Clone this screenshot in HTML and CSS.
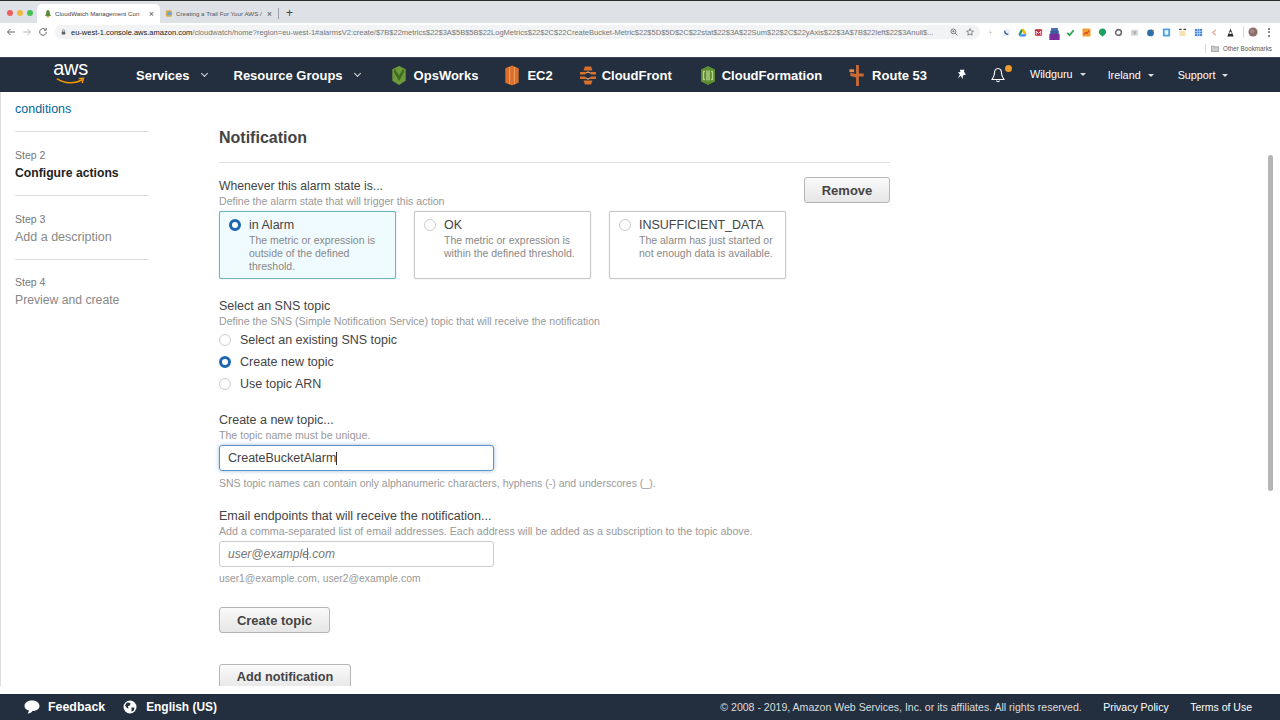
FILE: index.html
```html
<!DOCTYPE html>
<html lang="en">
<head>
<meta charset="utf-8">
<title>CloudWatch Management Console</title>
<link rel="stylesheet" href="styles.css">
</head>
<body>
<div class="page">
  <div class="tabstrip">
    <div class="lights"><i class="light red"></i><i class="light amber"></i><i class="light green"></i></div>
    <div class="tab active">
      <svg class="favicon" viewBox="0 0 10 10"><path d="M5 .5C3.4.5 2.8 2 2.8 4 2.8 6 1.500 7 1.500 8H8.500C8.500 7 7.200 6 7.200 4 7.200 2 6.600.5 5 .5Z" fill="#5c8a3a"/><rect x="3.500" y="8" width="3" height="1.800" fill="#c9a13a"/></svg>
      <span class="tabtext">CloudWatch Management Con</span><span class="tabx">×</span>
    </div>
    <div class="tab">
      <svg class="favicon" viewBox="0 0 10 10"><rect x="1" y="1" width="8" height="8" rx="2" fill="#e0a84a"/><circle cx="5.500" cy="5" r="2.500" fill="#6aa6cc"/></svg>
      <span class="tabtext">Creating a Trail For Your AWS /</span><span class="tabx">×</span>
    </div>
    <span class="tabsep"></span>
    <span class="newtab">+</span>
  </div>

  <div class="toolbar">
    <svg class="navicon" viewBox="0 0 12 12"><path d="M10.500 6H2M5.500 2.300 1.800 6l3.700 3.700" fill="none" stroke="#5f6368" stroke-width="1.200"/></svg>
    <svg class="navicon" viewBox="0 0 12 12"><path d="M1.500 6H10M6.500 2.300 10.200 6 6.500 9.700" fill="none" stroke="#b4b7bb" stroke-width="1.200"/></svg>
    <svg class="navicon" viewBox="0 0 12 12"><path d="M10 6A4 4 0 1 1 8.800 3.100M9.800 1.200V3.800H7.200" fill="none" stroke="#5f6368" stroke-width="1.200"/></svg>
    <div class="omnibox">
      <svg class="lock" viewBox="0 0 8 10"><rect x="1" y="4" width="6" height="5" rx=".8" fill="#5f6368"/><path d="M2.300 4V2.800a1.700 1.700 0 0 1 3.400 0V4" fill="none" stroke="#5f6368"/></svg>
      <span class="url"><b>eu-west-1.console.aws.amazon.com</b>/cloudwatch/home?region=eu-west-1#alarmsV2:create/$7B$22metrics$22$3A$5B$5B$22LogMetrics$22$2C$22CreateBucket-Metric$22$5D$5D$2C$22stat$22$3A$22Sum$22$2C$22yAxis$22$3A$7B$22left$22$3Anull$...</span>
      <svg class="omniicon" viewBox="0 0 10 10"><circle cx="4.200" cy="4.200" r="3" fill="none" stroke="#5f6368"/><path d="M6.500 6.500 9.300 9.300M3 4.200H5.400M4.200 3V5.400" stroke="#5f6368"/></svg>
      <svg class="omniicon" viewBox="0 0 10 10"><path d="M5 .8 6.200 3.700 9.300 4 7 6 7.700 9 5 7.500 2.300 9 3 6 .7 4 3.800 3.700Z" fill="none" stroke="#5f6368" stroke-width=".9"/></svg>
    </div>
    <div class="extensions">
      <svg class="ext" viewBox="0 0 10 10"><path d="M5.500 1 3.500 5.500H5L4.500 9 6.500 4.500H5Z" fill="#c8cbd0"/></svg>
      <svg class="ext" viewBox="0 0 10 10"><circle cx="5" cy="5" r="4" fill="#e8eef5"/><path d="M3 3c0 2.500 1.500 4 4 4" fill="none" stroke="#2b5e9e" stroke-width="1.400"/></svg>
      <svg class="ext" viewBox="0 0 10 10"><path d="M3.500 1H6.500L9.500 7H6.500Z" fill="#f4b400"/><path d="M3.500 1 .5 7 2 9.500 5 3.500Z" fill="#0f9d58"/><path d="M2 9.500H8L9.500 7H3.500Z" fill="#4285f4"/></svg>
      <svg class="ext" viewBox="0 0 10 10"><rect x="1" y="1.500" width="8" height="7" rx="1" fill="#c5283d"/><path d="M2.500 7.500V3.500L5 6l2.500-2.500V7.500" fill="none" stroke="#fff"/></svg>
      <svg class="ext tall" viewBox="0 0 12 14"><rect x="2" y="0" width="8" height="3.500" fill="#4a6fb5"/><rect x="1" y="3" width="10" height="4" fill="#3d5a9c"/><rect x="0" y="7" width="12" height="7" fill="#7b2d9b"/></svg>
      <svg class="ext" viewBox="0 0 10 10"><path d="M1.500 5.500 4 8 8.500 2.500" fill="none" stroke="#2e9e4f" stroke-width="2"/></svg>
      <svg class="ext" viewBox="0 0 10 10"><rect x=".5" y=".5" width="9" height="9" rx="1" fill="#f0a030"/><path d="M2 7 4 5 5.500 6 8 3" fill="none" stroke="#d9432f" stroke-width="1.300"/></svg>
      <svg class="ext" viewBox="0 0 10 10"><path d="M5 .5C7.500.5 9 2.300 9 4.500 9 6.800 7 8 5 9.500 3 8 1 6.800 1 4.500 1 2.300 2.500.5 5 .5Z" fill="#1aa260"/></svg>
      <svg class="ext" viewBox="0 0 10 10"><circle cx="5" cy="5" r="3.200" fill="none" stroke="#6b6e72" stroke-width="1.800"/></svg>
      <svg class="ext" viewBox="0 0 10 10"><rect x="1" y="2" width="8" height="6.500" rx="1" fill="#d5d7da"/><rect x="4" y="3.500" width="2.500" height="3.500" fill="#a9acb0"/></svg>
      <svg class="ext" viewBox="0 0 10 10"><circle cx="5" cy="5.500" r="3.800" fill="#2f6fa8"/><path d="M6 1 9 3 6.500 4.500Z" fill="#6b6e72"/></svg>
      <svg class="ext" viewBox="0 0 10 10"><rect x="1" y=".5" width="8" height="9" rx="1" fill="#4da3e0"/><rect x="3" y="2.500" width="4" height="5" fill="#e8f3fb"/></svg>
      <svg class="ext" viewBox="0 0 10 10"><rect x="1.500" y="3" width="7" height="6" fill="#f3e3b5"/><path d="M1 1.500H4M6 1.500H9" stroke="#444" stroke-width="1.400"/></svg>
      <svg class="ext" viewBox="0 0 10 10"><rect x="1" y="1" width="8" height="8" fill="#3f7fd9"/><path d="M3.700 1V9M6.300 1V9M1 3.700H9M1 6.300H9" stroke="#e6f0fb" stroke-width=".7"/></svg>
      <svg class="ext" viewBox="0 0 10 10"><path d="M6.500 2 3 5l3.500 3" fill="none" stroke="#eab2b2" stroke-width="1.800"/></svg>
      <svg class="ext" viewBox="0 0 10 10"><path d="M5 .5 8.500 9.500H1.500Z" fill="#2c2c2c"/><circle cx="5" cy="5.500" r="1.300" fill="#eee"/></svg>
      <span class="extsep"></span>
      <svg class="avatar" viewBox="0 0 12 12"><circle cx="6" cy="6" r="5.500" fill="#8f6f6b"/><circle cx="5" cy="5" r="2.500" fill="#a78782"/></svg>
      <span class="kebab"><i></i><i></i><i></i></span>
    </div>
  </div>

  <div class="bookmarks">
    <span class="bmsep"></span>
    <svg class="folder" viewBox="0 0 12 10"><path d="M.5 1.500H4.500L5.500 2.500H11.500V9.500H.5Z" fill="#c9cbce" stroke="#6f7276" stroke-width=".8"/></svg>
    <span class="bmtext">Other Bookmarks</span>
  </div>

  <nav class="awsnav">
    <div class="awslogo">
      <span class="awsword">aws</span>
      <svg class="smile" viewBox="0 0 30 8"><path d="M1 1.500C9 7 20 7 27 2.500" fill="none" stroke="#f90" stroke-width="1.600"/><path d="M23.500 1.500 28.500 1.200 27 6" fill="none" stroke="#f90" stroke-width="1.400"/></svg>
    </div>
    <a class="navitem main services">Services<span class="caret"></span></a>
    <a class="navitem main groups">Resource Groups<span class="caret"></span></a>
    <a class="shortcut opsworks">
      <svg class="svcicon" viewBox="0 0 16 22"><path d="M8 1 15 4.500V16.500L8 21 1 16.500V4.500Z" fill="#6d9a3a"/><path d="M3.500 4 8 11 12.500 4 13.500 7 8 17 2.500 7Z" fill="#3f6b22"/></svg>OpsWorks
    </a>
    <a class="shortcut ec2">
      <svg class="svcicon" viewBox="0 0 16 22"><path d="M8 .5 15 3.500V18.500L8 21.500 1 18.500V3.500Z" fill="#d9702c"/><path d="M5.500 2V20M10.500 2V20" stroke="#f09a5d" stroke-width="1.200"/></svg>EC2
    </a>
    <a class="shortcut cloudfront">
      <svg class="svcicon" viewBox="0 0 18 20"><path d="M5.500 0H12.500L14 4.500H4Z M0 6H6V9H0Z M12 6H18V9H12Z M0 11H6V14H0Z M12 11H18V14H12Z M4 15.500H14L12.500 20H5.500Z" fill="#d9702c"/><path d="M6 7.500 9 6 12 7.500M6 12.500 9 14 12 12.500" fill="none" stroke="#f0a060" stroke-width="1.300"/></svg>CloudFront
    </a>
    <a class="shortcut cloudformation">
      <svg class="svcicon" viewBox="0 0 16 20"><path d="M8 .5 15 4V16L8 19.500 1 16V4Z" fill="#5e8c32"/><path d="M5 6H3.500V14H5M11 6H12.500V14H11M7 5V15M9 5V15" fill="none" stroke="#b8d48c" stroke-width="1.300"/></svg>CloudFormation
    </a>
    <a class="shortcut route53">
      <svg class="svcicon" viewBox="0 0 16 22"><path d="M7 0H10V9H15V12H10V22H7V13L1 11.500V8L7 9.500Z" fill="#c96a35"/><rect x="0" y="4.500" width="5" height="3" fill="#e08a52"/></svg>Route 53
    </a>
    <svg class="pin" viewBox="0 0 14 14"><path d="M4.500 1 10 .8 9.200 3 11.500 6.500 8 7.500 7.800 12 5.500 8 2 11 4.500 6.500 2.200 4 5.200 3.500Z" fill="#fff"/></svg>
    <span class="bellwrap">
      <svg class="bell" viewBox="0 0 14 16"><path d="M7 1.500C4.500 1.500 3.500 3.500 3.500 6 3.500 9 2.500 10.500 1 12.500H13C11.500 10.500 10.500 9 10.500 6 10.500 3.500 9.500 1.500 7 1.500ZM5.500 13.500C5.800 15.200 8.200 15.200 8.500 13.500" fill="none" stroke="#fff" stroke-width="1.100"/></svg>
      <i class="dot"></i>
    </span>
    <a class="navitem account">Wildguru<span class="caret small"></span></a>
    <a class="navitem region">Ireland<span class="caret small"></span></a>
    <a class="navitem support">Support<span class="caret small"></span></a>
  </nav>

  <div class="workspace">
    <aside class="steps">
      <div class="step first"><a class="conditions">conditions</a></div>
      <div class="step"><div class="stepno">Step 2</div><div class="stepname current">Configure actions</div></div>
      <div class="step"><div class="stepno">Step 3</div><div class="stepname">Add a description</div></div>
      <div class="step last"><div class="stepno">Step 4</div><div class="stepname">Preview and create</div></div>
    </aside>
    <main class="content">
      <h2 class="heading">Notification</h2>
      <div class="statehead">
        <div class="statetext">
          <div class="label whenever">Whenever this alarm state is...</div>
          <div class="hint">Define the alarm state that will trigger this action</div>
        </div>
        <button class="btn remove">Remove</button>
      </div>
      <div class="cards">
        <div class="card selected">
          <span class="radio on"></span>
          <div><div class="cardtitle">in Alarm</div><div class="carddesc">The metric or expression is outside of the defined threshold.</div></div>
        </div>
        <div class="card">
          <span class="radio"></span>
          <div><div class="cardtitle">OK</div><div class="carddesc">The metric or expression is within the defined threshold.</div></div>
        </div>
        <div class="card">
          <span class="radio"></span>
          <div><div class="cardtitle">INSUFFICIENT_DATA</div><div class="carddesc">The alarm has just started or not enough data is available.</div></div>
        </div>
      </div>
      <div class="label topic">Select an SNS topic</div>
      <div class="hint">Define the SNS (Simple Notification Service) topic that will receive the notification</div>
      <div class="options">
        <div class="option"><span class="radio"></span>Select an existing SNS topic</div>
        <div class="option"><span class="radio on"></span>Create new topic</div>
        <div class="option"><span class="radio"></span>Use topic ARN</div>
      </div>
      <div class="label newtopic">Create a new topic...</div>
      <div class="hint">The topic name must be unique.</div>
      <div class="input focused">CreateBucketAlarm<span class="cursor"></span></div>
      <div class="hint below">SNS topic names can contain only alphanumeric characters, hyphens (-) and underscores (_).</div>
      <div class="label emails">Email endpoints that will receive the notification...</div>
      <div class="hint wide">Add a comma-separated list of email addresses. Each address will be added as a subscription to the topic above.</div>
      <div class="input placeholder">user@example.com<span class="ibeam"></span></div>
      <div class="hint below samples">user1@example.com, user2@example.com</div>
      <button class="btn create">Create topic</button>
      <button class="btn add">Add notification</button>
    </main>
    <div class="scrollbar"><div class="thumb"></div></div>
  </div>

  <footer class="footer">
    <svg class="footicon" viewBox="0 0 16 14"><path d="M8 .5C12 .5 15.500 2.500 15.500 6 15.500 9.500 12 11 8.500 11 8 12 6 13.500 3.500 13.500 4.500 12.500 5 11.500 4.800 10.500 2 9.800.5 8 .5 6 .5 2.500 4 .5 8 .5Z" fill="#fff"/></svg>
    <span class="foot feedback">Feedback</span>
    <svg class="footicon globe" viewBox="0 0 14 14"><circle cx="7" cy="7" r="6.500" fill="#fff"/><path d="M4 2.500 7.500 3 7 5.500 5 6 5.500 8.500 4 8 2 5.500ZM8.500 7.500 11.500 7.500 10.500 11 8.500 11.500Z" fill="#232f3e"/></svg>
    <span class="foot language">English (US)</span>
    <span class="copyright">© 2008 - 2019, Amazon Web Services, Inc. or its affiliates. All rights reserved.</span>
    <span class="footlink">Privacy Policy</span>
    <span class="footlink">Terms of Use</span>
  </footer>
</div>
</body>
</html>
```

FILE: styles.css
```css
* { box-sizing: border-box; }
html, body { margin: 0; padding: 0; }
body { font-family: "Liberation Sans", Arial, sans-serif; color: #444; background: #fff; overflow: hidden; }
.page { width: 1280px; height: 720px; display: flex; flex-direction: column; overflow: hidden; }

.tabstrip { height: 23px; flex: none; background: #dee1e6; border-top: 1px solid #2a2a2a; display: flex; align-items: center; padding-top: 3px; }
.lights { display: flex; gap: 4px; padding-left: 7px; width: 37px; flex: none; margin-top: -2px; }
.light { width: 6px; height: 6px; border-radius: 50%; display: block; }
.red { background: #ee5f5b; }
.amber { background: #f3b93f; }
.green { background: #45c155; }
.tab { height: 19px; width: 118px; flex: none; display: flex; align-items: center; padding-left: 5px; font-size: 6.200px; color: #555; }
.tab.active { background: #fff; width: 123px; border-radius: 5px 5px 0 0; color: #444; padding-left: 7px; }
.favicon { width: 8px; height: 9px; margin-right: 3px; flex: none; }
.tabtext { flex: 1; white-space: nowrap; overflow: hidden; }
.tabx { font-size: 9px; padding-right: 6px; color: #555; }
.tabsep { width: 1px; height: 11px; background: #9a9da1; margin: 0 7px 0 0; }
.newtab { font-size: 12px; color: #444; line-height: 12px; margin-top: -1px; }

.toolbar { height: 18px; flex: none; background: #fff; display: flex; align-items: center; padding-left: 6px; }
.navicon { width: 10px; height: 10px; flex: none; margin-right: 6px; }
.navicon:nth-child(3) { margin-right: 7px; }
.omnibox { width: 925px; height: 14px; flex: none; background: #f1f3f4; border-radius: 7px; display: flex; align-items: center; padding: 0 6px 0 6px; font-size: 7.500px; color: #777; }
.lock { width: 5px; height: 6px; flex: none; margin-right: 5px; }
.url { flex: 1; white-space: nowrap; overflow: hidden; }
.url b { font-weight: normal; color: #222; }
.omniicon { width: 8px; height: 8px; flex: none; margin-left: 8px; }
.extensions { display: flex; align-items: center; gap: 7px; padding-left: 6px; flex: 1; }
.ext { width: 9px; height: 9px; flex: none; }
.ext.tall { width: 11px; height: 12px; margin: 3px -1px 0; }
.extsep { width: 1px; height: 12px; background: #d8dadd; margin: 0 -3px 0 1px; }
.avatar { width: 10px; height: 10px; flex: none; }
.kebab { display: flex; flex-direction: column; gap: 1.500px; margin-left: 3px; }
.kebab i { width: 2px; height: 2px; background: #5f6368; border-radius: 50%; display: block; }

.bookmarks { height: 15px; flex: none; background: #fff; display: flex; align-items: center; justify-content: flex-end; padding-right: 8px; font-size: 6.300px; color: #555; }
.bmsep { width: 1px; height: 9px; background: #d8dadd; margin-right: 5px; }
.folder { width: 8px; height: 7px; margin-right: 4px; }

.awsnav { height: 35px; flex: none; margin-top: 1px; background: #232f3e; border-top: 1px solid #3a4553; display: flex; align-items: center; color: #fff; font-size: 13px; }
.awsnav a { color: #fff; white-space: nowrap; }
.awslogo { width: 33px; margin-left: 54px; flex: none; display: flex; flex-direction: column; align-items: center; }
.awsword { font-size: 20px; line-height: 15px; letter-spacing: -.3px; margin-top: -4px; }
.smile { width: 29px; height: 8px; display: block; margin-top: 1px; }
.navitem { display: flex; align-items: center; }
.main { font-weight: bold; font-size: 13px; color: #fff; }
.services { margin-left: 49px; }
.groups { margin-left: 27px; }
.caret { width: 5px; height: 5px; border-right: 1.500px solid #ddd; border-bottom: 1.500px solid #ddd; transform: rotate(45deg); margin-left: 12px; margin-top: -3px; }
.caret.small { border: 0; transform: none; margin: 1px 0 0 7px; border-left: 3px solid transparent; border-right: 3px solid transparent; border-top: 3px solid #ddd; width: 0; height: 0; }
.shortcut { display: flex; align-items: center; font-weight: bold; font-size: 13px; }
.svcicon { height: 21px; width: 16px; flex: none; margin-right: 7px; }
.opsworks { margin-left: 31px; }
.ec2 { margin-left: 26px; }
.cloudfront { margin-left: 27px; }
.cloudfront .svcicon { margin-right: 6px; }
.cloudformation { margin-left: 28px; }
.cloudformation .svcicon { margin-right: 6px; }
.route53 { margin-left: 27px; }
.pin { width: 12px; height: 12px; margin-left: 29px; flex: none; }
.bellwrap { position: relative; margin-left: 23px; display: block; width: 14px; height: 16px; }
.bell { width: 14px; height: 16px; display: block; }
.dot { position: absolute; left: 14px; top: -2px; width: 7px; height: 7px; background: #ec9a2c; border-radius: 50%; }
.account { font-size: 10.800px; margin-left: 25px; margin-top: -3px; }
.region { font-size: 10.800px; margin-left: 22px; }
.support { font-size: 10.800px; margin-left: 24px; }

.workspace { height: 594px; flex: none; display: flex; overflow: hidden; border-left: 1px solid #ddd; position: relative; }
.steps { width: 218px; flex: none; padding: 10px 0 0 14px; }
.step { width: 134px; height: 64px; border-bottom: 1px solid #ddd; padding-top: 16px; }
.step.first { height: 30px; padding-top: 0; }
.step.last { border-bottom: 0; padding-top: 15px; }
.conditions { color: #00669e; font-size: 12.500px; line-height: 15px; display: block; }
.stepno { font-size: 10.500px; color: #777; line-height: 14px; }
.stepname { font-size: 12.500px; color: #888; line-height: 18px; margin-top: 2px; }
.stepname.current { font-weight: bold; font-size: 12.200px; color: #222; }
.last .stepname { font-size: 12.200px; }

.content { width: 671px; flex: none; padding-top: 36px; }
.heading { margin: 0; font-size: 16px; line-height: 20px; font-weight: bold; color: #444; padding-bottom: 14px; border-bottom: 1px solid #ddd; }
.statehead { display: flex; justify-content: space-between; align-items: flex-start; margin-top: 14px; }
.statetext { padding-top: 1px; }
.label { font-size: 12.500px; line-height: 16px; color: #444; }
.whenever { font-size: 12.200px; }
.hint { font-size: 10.600px; line-height: 14px; color: #999; }
.wide { font-size: 10.650px; }
.btn { font: bold 13px "Liberation Sans", Arial, sans-serif; color: #444; background: linear-gradient(#fafafa, #e6e6e6); border: 1px solid #b5b5b5; border-radius: 3px; height: 26px; padding: 0; display: block; }
.remove { width: 86px; }
.cards { display: flex; gap: 18px; margin-top: 3px; }
.card { width: 177px; height: 68px; border: 1px solid #c8c8c8; box-shadow: 0 0 1px #aaa; border-radius: 2px; display: flex; padding: 5px 9px; gap: 8px; }
.card.selected { border-color: #6fb4bd; box-shadow: 0 0 1px #6fb4bd; background: #f0fbff; }
.cardtitle { font-size: 12.500px; line-height: 16px; color: #444; }
.carddesc { font-size: 10.500px; line-height: 13px; color: #888; margin-top: 1px; }
.radio { width: 12px; height: 12px; border-radius: 50%; border: 1px solid #ccc; background: #fff; flex: none; display: block; margin-top: 1.500px; }
.radio.on { border: 3.500px solid #1e66ad; background: #fff; }
.topic { margin-top: 19px; }
.options { display: flex; flex-direction: column; margin-top: .500px; }
.option { display: flex; align-items: center; gap: 9px; height: 22px; font-size: 12.500px; color: #444; }
.option .radio { margin-top: 0; }
.newtopic { margin-top: 17px; }
.input { position: relative; width: 275px; height: 26px; margin-top: 3.500px; border: 1px solid #ccc; border-radius: 3px; font-size: 12.500px; padding-left: 8px; color: #444; display: flex; align-items: center; }
.focused { border-color: #5b93c9; box-shadow: 0 0 4px rgba(91, 147, 201, .6); }
.cursor { width: 1px; height: 13px; background: #333; }
.placeholder { font-style: italic; font-size: 12px; color: #777; }
.ibeam { position: absolute; left: 87px; top: 6px; width: 1px; height: 12px; background: #777; }
.below { margin-top: 4.500px; font-size: 10.500px; }
.samples { font-size: 10.350px; }
.emails { margin-top: 18px; }
.create { width: 111px; margin-top: 21.500px; }
.add { width: 132px; margin-top: 31px; font-size: 12.700px; }
.scrollbar { position: absolute; right: 7px; top: 63px; width: 5px; height: 336px; }
.thumb { width: 100%; height: 100%; background: #b5b5b5; border-radius: 3px; }

.footer { height: 26px; flex: none; margin-top: 8px; background: #232f3e; color: #fff; display: flex; align-items: center; padding: 0 28px 0 24px; }
.footicon { width: 16px; height: 14px; flex: none; }
.foot { font-size: 12.400px; font-weight: bold; margin-left: 8px; }
.feedback { margin-right: 18px; }
.globe { width: 14px; }
.language { font-size: 11.900px; margin-left: 9px; }
.copyright { font-size: 10.560px; margin-left: auto; color: #ddd; }
.footlink { font-size: 10.500px; margin-left: 21.500px; }
```
